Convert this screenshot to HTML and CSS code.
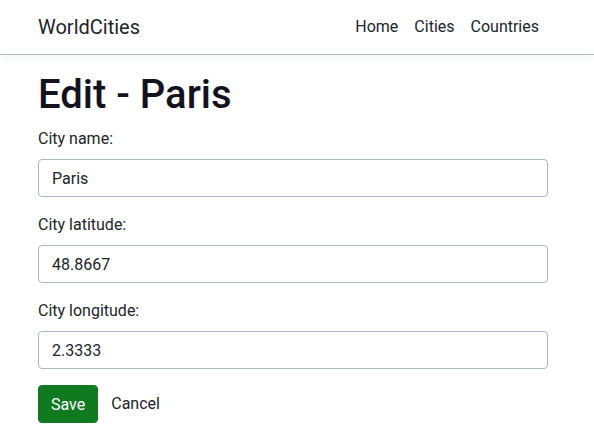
FILE: index.html
```html
<!DOCTYPE html>
<html lang="en">
<head>
<meta charset="utf-8">
<title>WorldCities</title>
<link rel="stylesheet" href="styles.css">
</head>
<body>
<header class="navbar">
  <div class="container nav-inner">
    <a class="brand" href="#">WorldCities</a>
    <nav class="nav-links">
      <a href="#">Home</a>
      <a href="#">Cities</a>
      <a href="#">Countries</a>
    </nav>
  </div>
</header>
<main class="container">
  <h1 class="title">Edit - Paris</h1>
  <form class="form">
    <div class="field">
      <label for="name">City name:</label>
      <input id="name" class="input" type="text" value="Paris">
    </div>
    <div class="field">
      <label for="lat">City latitude:</label>
      <input id="lat" class="input" type="text" value="48.8667">
    </div>
    <div class="field">
      <label for="lon">City longitude:</label>
      <input id="lon" class="input" type="text" value="2.3333">
    </div>
    <div class="actions">
      <button type="button" class="btn-save">Save</button>
      <a class="btn-cancel" href="#">Cancel</a>
    </div>
  </form>
</main>
</body>
</html>
```
FILE: styles.css
```css
* { box-sizing: border-box; }
html, body { margin: 0; padding: 0; }
body {
  font-family: Roboto, "Liberation Sans", sans-serif;
  font-size: 16px;
  line-height: 1.5;
  color: #212529;
  background: #fff;
}
a { color: #212529; text-decoration: none; }
.container {
  padding: 0 46px 0 38px;
}
.navbar {
  background: #fff;
  border-bottom: 1px solid #b4bec8;
  box-shadow: 0 4px 8px rgba(60, 110, 90, 0.06);
  margin-bottom: 16px;
}
.nav-inner {
  display: flex;
  align-items: center;
  justify-content: space-between;
  height: 54px;
}
.brand {
  font-size: 20px;
  line-height: 30px;
}
.nav-links {
  display: flex;
}
.nav-links a {
  padding: 8px;
  font-size: 16px;
}
.nav-links a:last-child { padding-right: 9px; }
.title {
  margin: 0 0 8px;
  font-size: 40px;
  font-weight: 500;
  line-height: 1.2;
  color: #14121f;
}
.field {
  margin-bottom: 16px;
}
.field label {
  display: block;
  margin-bottom: 8px;
  font-size: 16px;
  line-height: 24px;
}
.input {
  display: block;
  width: 100%;
  height: 38px;
  padding: 6px 13px;
  font-family: inherit;
  font-size: 16px;
  color: #212529;
  border: 1px solid #adb5bd;
  border-radius: 4px;
  background: #fff;
}
.actions {
  display: flex;
  align-items: center;
  gap: 13px;
}
.btn-save {
  height: 38px;
  padding: 0 12px;
  font-family: inherit;
  font-size: 16px;
  color: #fff;
  background: #0f7a20;
  border: 1px solid #0f7a20;
  border-radius: 4px;
}
.btn-cancel {
  font-size: 16px;
}
```
